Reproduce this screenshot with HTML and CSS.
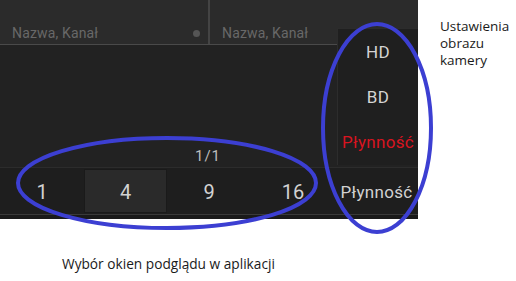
FILE: index.html
```html
<!DOCTYPE html>
<html lang="pl">
<head>
<meta charset="utf-8">
<link rel="stylesheet" href="styles.css">
</head>
<body>
<div class="page">
  <div class="left">
    <div class="app">
      <div class="tiles">
        <div class="tile tile-a"><span class="name">Nazwa, Kanał</span><span class="dot"></span></div>
        <div class="tile tile-b"><span class="name">Nazwa, Kanał</span></div>
      </div>
      <div class="middle">
        <div class="pager">1/1</div>
      </div>
      <div class="bar">
        <div class="cell">1</div>
        <div class="cell selected">4</div>
        <div class="cell">9</div>
        <div class="cell">16</div>
        <div class="cell small">Płynność</div>
      </div>
      <div class="menu">
        <div class="opt">HD</div>
        <div class="opt">BD</div>
        <div class="opt active">Płynność</div>
      </div>
    </div>
    <div class="caption">Wybór okien podglądu w aplikacji</div>
  </div>
  <div class="note">Ustawienia<br>obrazu<br>kamery</div>
  <svg class="marks" width="516" height="281" viewBox="0 0 516 281">
    <ellipse cx="167" cy="183" rx="149" ry="45" fill="none" stroke="#3c3fd2" stroke-width="4"/>
    <ellipse cx="377" cy="128" rx="54" ry="104" fill="none" stroke="#3c3fd2" stroke-width="4"/>
  </svg>
</div>
</body>
</html>
```
FILE: styles.css
```css
* { box-sizing: border-box; margin: 0; padding: 0; }
html, body { background: #fff; }
body { width: 516px; height: 281px; overflow: hidden; }
.page { position: relative; display: flex; width: 516px; height: 281px; }
.left { width: 418px; display: flex; flex-direction: column; }
.app { position: relative; width: 418px; height: 219px; background: #222; display: flex; flex-direction: column; font-family: Roboto, "Noto Sans", sans-serif; }
.tiles { display: flex; height: 45px; border-bottom: 1px solid #4a4a4a; }
.tile { position: relative; height: 44px; background: #2b2b2b; display: flex; align-items: flex-end; padding: 0 0 2px 12px; }
.tile-a { width: 210px; border-right: 2px solid #444; }
.tile-b { flex: 1; }
.name { color: #686868; font-size: 14px; line-height: 17px; letter-spacing: 0.15px; }
.dot { position: absolute; right: 8px; bottom: 7px; width: 7px; height: 7px; border-radius: 50%; background: #555; }
.middle { height: 122px; display: flex; align-items: flex-end; justify-content: center; padding-bottom: 2px; }
.pager { color: #bdbdbd; font-size: 15px; line-height: 18px; letter-spacing: 1px; width: 418px; text-align: center; padding-right: 2px; }
.bar { height: 52px; display: grid; grid-template-columns: 84px 83px 84px 84px 83px; background: #1e1e1e; border-top: 1px solid #2c2c2c; border-bottom: 4px solid #1a1a1a; box-shadow: inset 0 -1px 0 #3a3a3a; padding-bottom: 1px; }
.cell { display: flex; align-items: center; justify-content: center; color: #d2d2d2; font-size: 20px; padding-top: 2px; }
.cell.small { font-size: 17px; letter-spacing: 0.3px; }
.selected { background: #2a2a2a; margin: 1px 0 1px 0; border: 1px solid #1a1a1a; }
.menu { position: absolute; left: 337px; top: 28px; width: 81px; height: 137px; background: #1f1f1f; border-top: 1px solid #2c2c2c; border-left: 1px solid #2c2c2c; display: flex; flex-direction: column; }
.opt { flex: 1; display: flex; align-items: center; justify-content: center; color: #d4d4d4; font-size: 17px; letter-spacing: 0.3px; }
.opt.active { color: #d8141f; }
.caption { margin: 35px 0 0 62px; font-family: "Open Sans", "Noto Sans", sans-serif; font-size: 13.7px; color: #1a1a1a; }
.note { margin: 18px 0 0 22px; font-family: "Open Sans", "Noto Sans", sans-serif; font-size: 13.5px; line-height: 17px; color: #1a1a1a; }
.marks { position: absolute; left: 0; top: 0; pointer-events: none; }
```
